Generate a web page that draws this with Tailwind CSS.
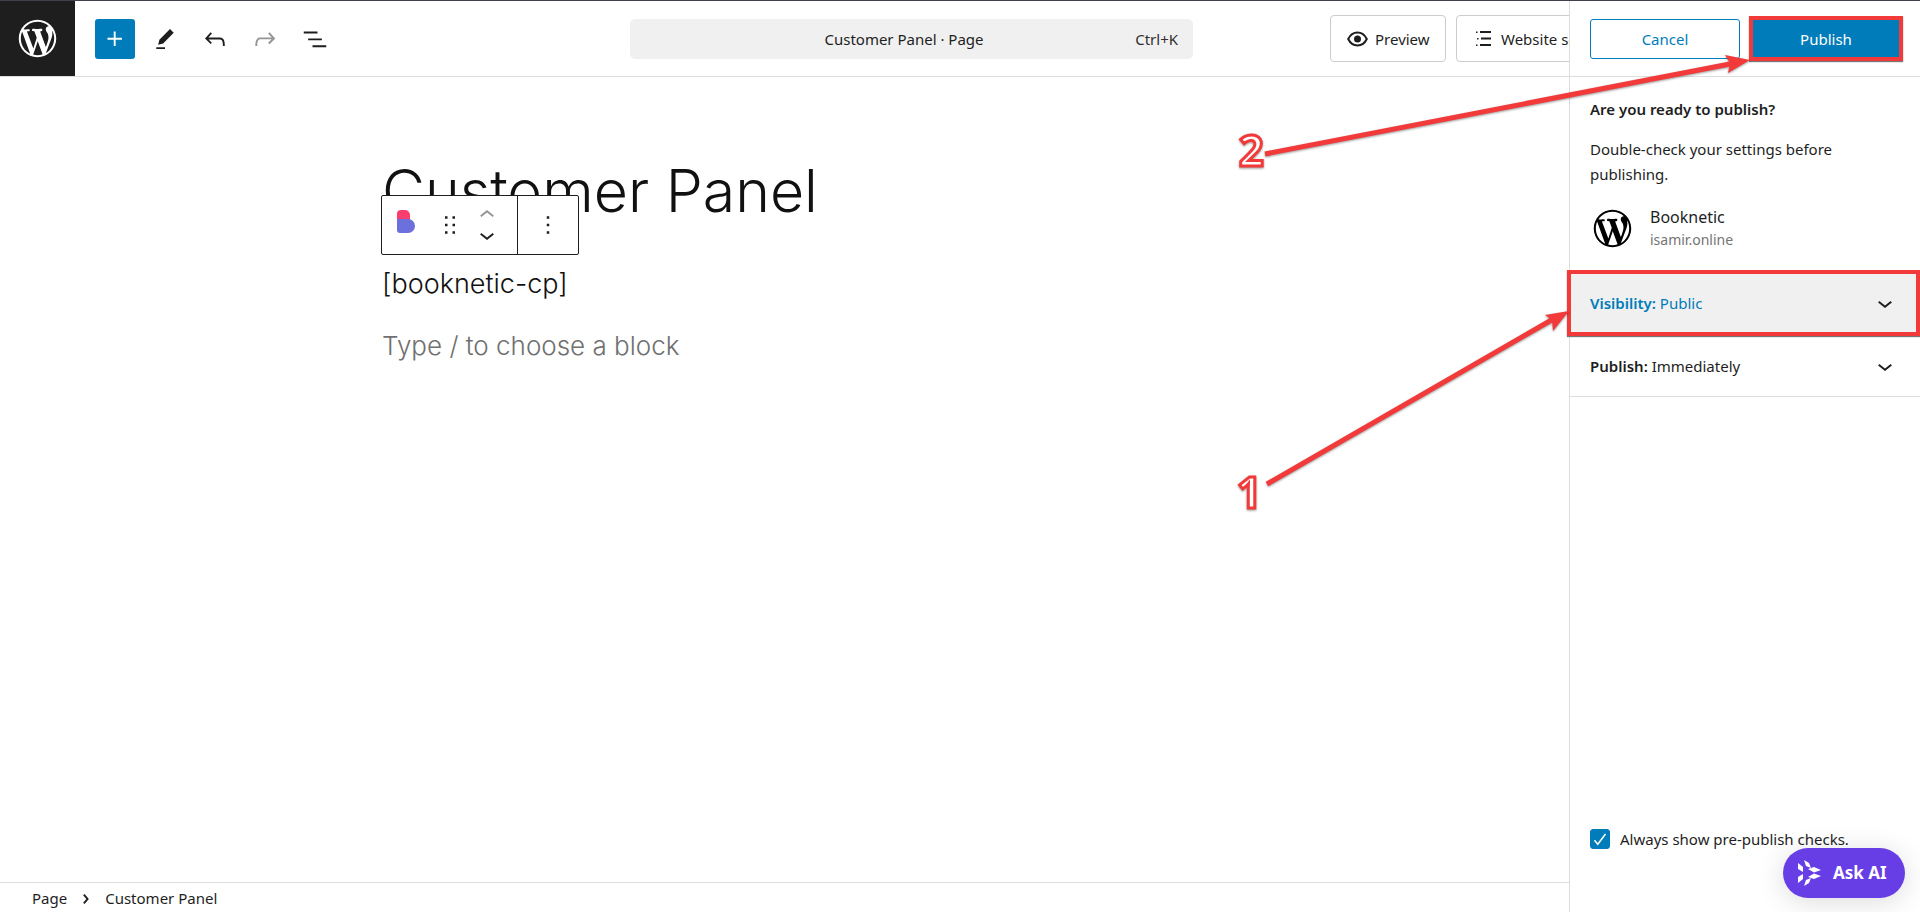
<!DOCTYPE html>
<html lang="en">
<head>
  <meta charset="UTF-8" />
  <meta name="viewport" content="width=device-width, initial-scale=1.0" />
  <title>Edit Page - Customer Panel</title>
  <script src="https://cdn.jsdelivr.net/npm/@tailwindcss/browser@4"></script>
</head>
<body class="relative flex h-screen overflow-hidden border-t border-[#3f4048] bg-white font-['Noto_Sans',sans-serif] text-[15px] text-[#1e1e1e]">

  <!-- Editor -->
  <div class="flex min-w-0 flex-1 flex-col">
    <header class="flex h-[76px] shrink-0 items-center overflow-hidden border-b border-[#ddd]">
      <a href="#" aria-label="View pages" class="flex h-[75px] w-[75px] shrink-0 items-center justify-center bg-[#1e1e1e] text-white">
        <svg class="size-[45px]" viewBox="-2 -2 24 24" fill="currentColor"><path id="wp" d="M20 10c0-5.51-4.49-10-10-10C4.48 0 0 4.49 0 10c0 5.52 4.48 10 10 10 5.51 0 10-4.48 10-10zM7.78 15.37L4.37 6.22c.55-.02 1.17-.08 1.17-.08.5-.06.44-1.13-.06-1.11 0 0-1.45.11-2.37.11-.18 0-.37 0-.58-.01C4.12 2.69 6.87 1.11 10 1.11c2.33 0 4.45.87 6.05 2.34-.68-.11-1.65.39-1.65 1.58 0 .74.45 1.36.9 2.1.35.61.55 1.36.55 2.46 0 1.49-1.4 5-1.4 5l-3.03-8.37c.54-.02.82-.17.82-.17.5-.05.44-1.25-.06-1.22 0 0-1.44.12-2.38.12-.87 0-2.33-.12-2.33-.12-.5-.03-.56 1.2-.06 1.22l.92.08 1.26 3.41zM17.41 10c.24-.64.74-1.87.43-4.25.7 1.29 1.05 2.71 1.05 4.25 0 3.29-1.73 6.24-4.4 7.78.97-2.59 1.94-5.2 2.92-7.78zM6.1 18.09C3.12 16.65 1.11 13.53 1.11 10c0-1.3.23-2.48.72-3.59C3.25 10.3 4.67 14.2 6.1 18.09zm4.03-6.63l2.58 6.98c-.86.29-1.76.45-2.71.45-.79 0-1.57-.11-2.29-.33.81-2.38 1.62-4.74 2.42-7.1z"/></svg>
      </a>

      <div class="ml-5 flex gap-[10px]">
        <button aria-label="Add block" class="flex size-10 items-center justify-center rounded-[3px] bg-[#007cba] text-white">
          <svg class="size-[30px]" viewBox="0 0 24 24" fill="currentColor"><path d="M11 12.5V17.5H12.5V12.5H17.5V11H12.5V6H11V11H6V12.5H11Z"/></svg>
        </button>
        <button aria-label="Tools" class="flex size-10 items-center justify-center">
          <svg class="size-[30px]" viewBox="0 0 24 24" fill="currentColor"><path d="m19 7-3-3-8.5 8.5-1 4 4-1L19 7Zm-7 11.5H5V20h7v-1.5Z"/></svg>
        </button>
        <button aria-label="Undo" class="flex size-10 items-center justify-center">
          <svg class="size-[30px]" viewBox="0 0 24 24" fill="currentColor"><path d="M18.3 11.7c-.6-.6-1.4-.9-2.3-.9H6.7l2.9-3.3-1.1-1-4.5 5L8.5 16l1-1-2.7-2.7H16c.5 0 .9.2 1.3.5 1 1 1 3.4 1 4.5v.3h1.5v-.2c0-1.5 0-4.3-1.5-5.7z"/></svg>
        </button>
        <button aria-label="Redo" disabled class="flex size-10 items-center justify-center text-[#949494]">
          <svg class="size-[30px]" viewBox="0 0 24 24" fill="currentColor"><path d="M15.6 6.5l-1.1 1 2.9 3.3H8c-.9 0-1.7.3-2.3.9-1.4 1.5-1.4 4.2-1.4 5.6v.2h1.5v-.3c0-1.1 0-3.5 1-4.5.3-.3.7-.5 1.3-.5h9.2L14.5 15l1.1 1.1 4.6-4.6-4.6-5z"/></svg>
        </button>
        <button aria-label="Document overview" class="flex size-10 items-center justify-center">
          <svg class="size-[30px]" viewBox="0 0 24 24" fill="currentColor"><path d="M3 6h11v1.5H3V6Zm3.5 5.5h11V13h-11v-1.5ZM21 17H10v1.5h11V17Z"/></svg>
        </button>
      </div>

      <div class="flex min-w-0 flex-1 justify-center pl-[158px]">
        <button class="grid h-10 w-[563px] grid-cols-[1fr_auto_1fr] items-center rounded-[5px] bg-[#f0f0f0] pt-px pr-[15px]">
          <span></span>
          <span>Customer Panel · Page</span>
          <span class="text-right text-[#2f2f2f]">Ctrl+K</span>
        </button>
      </div>

      <div class="flex w-[239px] shrink-0 gap-[10px]">
        <button class="flex h-[47px] w-[116px] shrink-0 items-center gap-[7px] rounded-[4px] border border-[#ccc] pt-px pl-[16px]">
          <svg class="h-[20px] w-[21px]" viewBox="0 0 21 20"><path d="M1.2 10C3.2 5.9 6.6 3.5 10.5 3.5S17.8 5.9 19.8 10C17.8 14.1 14.4 16.5 10.5 16.5S3.2 14.1 1.2 10Z" fill="none" stroke="currentColor" stroke-width="2"/><circle cx="10.5" cy="10" r="3.5" fill="currentColor"/></svg>
          Preview
        </button>
        <button class="flex h-[47px] shrink-0 items-center gap-[10px] rounded-[4px] border border-[#ccc] px-[19px] pt-px whitespace-nowrap">
          <svg class="h-[18px] w-[15px]" viewBox="0 0 15 18" fill="currentColor"><path d="M0 1.5h1.5V3H0zM4 1h11v2H4zM1 8h1.5v1.5H1zM5 7.5h10v2H5zM0 14.5h1.5V16H0zM4 14h11v2H4z"/></svg>
          Website settings
        </button>
      </div>
    </header>

    <main class="flex-1 pt-[78px] pl-[382px]">
      <div class="relative">
        <h1 class="font-[Inter,sans-serif] text-[59px] leading-[72px] font-light text-[#111]">Customer Panel</h1>

        <!-- Block toolbar -->
        <div class="absolute top-[40px] -left-px flex h-[60px] rounded-[2px] border border-[#1e1e1e] bg-white">
          <div class="flex w-[136px] items-center border-r border-[#1e1e1e]">
            <button aria-label="Booknetic" class="flex w-[48px] justify-center pb-2">
              <svg class="h-[23px] w-[18px]" viewBox="0 0 18 23"><path d="M0 4a4 4 0 0 1 4-4h4a5 5 0 0 1 5 5v5H0z" fill="#fb3e6e"/><path d="M0 9h11a6.5 6.5 0 0 1 0 14H3a3 3 0 0 1-3-3z" fill="#6c70dc"/></svg>
            </button>
            <button aria-label="Drag" class="flex w-[40px] justify-center">
              <svg class="size-[30px]" viewBox="0 0 24 24" fill="currentColor"><path d="M8 7h2V5H8v2zm0 6h2v-2H8v2zm0 6h2v-2H8v2zm6-14v2h2V5h-2zm0 8h2v-2h-2v2zm0 6h2v-2h-2v2z"/></svg>
            </button>
            <div class="flex w-[34px] flex-col items-center">
              <button aria-label="Move up" disabled class="flex h-[20px] items-center text-[#949494]">
                <svg class="size-[30px]" viewBox="0 0 24 24" fill="currentColor"><path d="M6.5 12.4L12 8l5.5 4.4-.9 1.2L12 10l-4.5 3.6-1-1.2z"/></svg>
              </button>
              <button aria-label="Move down" class="flex h-[20px] items-center">
                <svg class="size-[30px]" viewBox="0 0 24 24" fill="currentColor"><path d="M17.5 11.6L12 16l-5.5-4.4.9-1.2L12 14l4.5-3.6 1 1.2z"/></svg>
              </button>
            </div>
          </div>
          <button aria-label="Options" class="flex w-[60px] items-center justify-center">
            <svg class="size-[30px]" viewBox="0 0 24 24" fill="currentColor"><path d="M13 19h-2v-2h2v2zm0-6h-2v-2h2v2zm0-6h-2V5h2v2z"/></svg>
          </button>
        </div>
      </div>
      <p class="mt-[37px] font-[Inter,sans-serif] text-[27px] leading-[40px] font-light text-[#111]">[booknetic-cp]</p>
      <p class="mt-[22px] font-[Inter,sans-serif] text-[26px] leading-[40px] font-light text-[#707070]">Type / to choose a block</p>
    </main>

    <footer class="flex h-[30px] shrink-0 items-center border-t border-[#ddd] pt-[2px] pl-[32px]">
      <a href="#">Page</a>
      <svg class="mx-[4px] size-[30px]" viewBox="0 0 24 24" fill="currentColor"><path d="M10.862 8.04L14.28 12.029L10.862 16.017L9.723 15.04L12.305 12.029L9.723 9.017L10.862 8.04Z"/></svg>
      <span>Customer Panel</span>
    </footer>
  </div>

  <!-- Publish panel -->
  <aside class="flex w-[351px] shrink-0 flex-col border-l border-[#ddd] bg-white">
    <div class="flex h-[76px] shrink-0 items-center gap-[9px] border-b border-[#ddd] pr-[17px] pl-5">
      <button class="h-10 w-[150px] rounded-[3px] border border-[#007cba] pt-[2px] text-[#007cba]">Cancel</button>
      <button class="h-[45px] flex-1 border-4 border-[#f23a3a] bg-[#007cba] pt-[2px] text-white shadow-[0_1px_1px_#777]">Publish</button>
    </div>

    <div class="px-5 pt-5">
      <h2 class="leading-[25px] font-semibold">Are you ready to publish?</h2>
      <p class="mt-[15px] leading-[25px]">Double-check your settings before publishing.</p>
      <div class="mt-[18px] flex items-center gap-[15px]">
        <svg class="size-[45px] text-black" viewBox="-2 -2 24 24" fill="currentColor"><use href="#wp"/></svg>
        <div>
          <div class="text-[16px] leading-[24px]">Booknetic</div>
          <div class="text-[14px] leading-[22px] text-[#757575]">isamir.online</div>
        </div>
      </div>
    </div>

    <button class="mt-[19px] -ml-[3px] flex h-[66px] items-center justify-between border-4 border-[#f23a3a] bg-[#f0f0f0] pr-[16px] pl-[19px] text-left text-[#007cba] shadow-[0_1px_1px_#777]">
      <span><b class="font-semibold">Visibility:</b> Public</span>
      <svg class="size-[30px] text-[#1e1e1e]" viewBox="0 0 24 24" fill="currentColor"><path d="M17.5 11.6L12 16l-5.5-4.4.9-1.2L12 14l4.5-3.6 1 1.2z"/></svg>
    </button>
    <button class="flex h-[61px] items-center justify-between border-b border-[#ddd] pr-[20px] pl-5 text-left">
      <span><b class="font-semibold">Publish:</b> Immediately</span>
      <svg class="size-[30px]" viewBox="0 0 24 24" fill="currentColor"><path d="M17.5 11.6L12 16l-5.5-4.4.9-1.2L12 14l4.5-3.6 1 1.2z"/></svg>
    </button>

    <div class="mt-auto flex items-center px-5 pb-[62px]">
      <span class="relative size-5">
        <input id="checks" type="checkbox" checked class="block size-5 appearance-none rounded-[3px] border border-[#1e1e1e] checked:border-[#007cba] checked:bg-[#007cba]" />
        <svg class="pointer-events-none absolute inset-0 size-5" viewBox="0 0 20 20" fill="none" stroke="#fff" stroke-width="1.5"><path d="M4.5 11.2l3.3 4L15.5 5"/></svg>
      </span>
      <label for="checks" class="ml-[10px]">Always show pre-publish checks.</label>
    </div>
  </aside>

  <button class="absolute right-[15px] bottom-[14px] flex h-[50px] w-[122px] items-center gap-[12px] rounded-full bg-[#673de6] pl-[15px] text-[17px] font-bold text-white shadow-[0_4px_28px_rgba(0,0,0,0.14)]">
    <svg class="h-[26px] w-[23px]" viewBox="0 0 23 26" fill="currentColor"><path d="M0 3l5 4v5l-5-3zM0 23l5-4v-5l-5 3zM6 0l5 3 2 5-5-2zM6 26l5-3 2-5-5 2zM10 9l6-2 7 3-7 2.5zM10 17l6 2 7-3-7-2.5z"/></svg>
    Ask AI
  </button>

  <!-- Step arrows -->
  <svg class="pointer-events-none absolute -top-px right-0 h-[540px] w-[700px] drop-shadow-[0_1px_1px_rgba(0,0,0,0.4)]" viewBox="1220 0 700 540" fill="#f23a3a">
    <path d="M1265 154L1735 63M1267 484L1555 318" stroke="#f23a3a" stroke-width="5"/>
    <path d="M1750 60L1725 55L1730 63L1728 73ZM1569 311L1545 315L1552 320L1553 331Z"/>
    <g class="font-['Open_Sans',sans-serif] text-[43px] font-bold" fill="#fff" stroke="#f23a3a" stroke-width="3">
      <text x="1239" y="166">2</text>
      <text x="1237" y="508">1</text>
    </g>
  </svg>
</body>
</html>
